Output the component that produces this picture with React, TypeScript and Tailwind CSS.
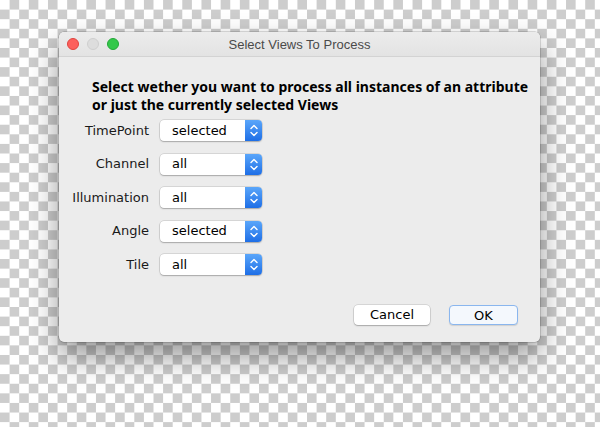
import React from "react";

const ui = "font-['DejaVu_Sans',sans-serif]";

function Stepper() {
  return (
    <div className="flex h-full w-[17px] items-center justify-center rounded-r-[4px] bg-gradient-to-b from-[#5aa6fa] to-[#1d6ee6]">
      <svg width="10" height="15" viewBox="0 0 10 15" fill="none">
        <path d="M2 5.5 L5 2.5 L8 5.5" stroke="white" strokeWidth="1.4" strokeLinecap="round" strokeLinejoin="round" />
        <path d="M2 9.5 L5 12.5 L8 9.5" stroke="white" strokeWidth="1.4" strokeLinecap="round" strokeLinejoin="round" />
      </svg>
    </div>
  );
}

function Row({ label, value }: { label: string; value: string }) {
  return (
    <div className="flex h-[21px] items-center">
      <span className="w-[90px] text-right text-[13px] text-[#1a1a1a]">{label}</span>
      <div className="ml-[11px] flex h-[21px] w-[102px] items-center justify-between rounded-[4px] bg-white shadow-[0_0_0_0.5px_rgba(0,0,0,0.18),0_1px_1.5px_rgba(0,0,0,0.22)]">
        <span className="pl-[12px] text-[13px] text-black">{value}</span>
        <Stepper />
      </div>
    </div>
  );
}

export default function App() {
  const rows = [
    ["TimePoint", "selected"],
    ["Channel", "all"],
    ["Illumination", "all"],
    ["Angle", "selected"],
    ["Tile", "all"],
  ];

  return (
    <div className="h-[427px] w-[600px] overflow-hidden bg-white bg-[image:conic-gradient(#cdcdcd_25%,#ffffff_0_50%,#cdcdcd_0_75%,#ffffff_0)] bg-[length:19.2px_19.2px] pl-[59px] pt-[32px]">
      <div className={`flex h-[310px] w-[481px] flex-col rounded-[5px] bg-[#ececec] shadow-[0_14px_30px_rgba(0,0,0,0.42),0_0_0_0.5px_rgba(0,0,0,0.25)] ${ui}`}>
        {/* title bar */}
        <div className="grid h-[25px] grid-cols-[1fr_auto_1fr] items-center rounded-t-[5px] border-b border-[#d3d3d3] bg-gradient-to-b from-[#ececec] to-[#e3e3e3]">
          <div className="flex items-center gap-[8px] pl-[8px]">
            <span className="h-[12px] w-[12px] rounded-full border border-[#e0443e] bg-[#fc605c]" />
            <span className="h-[12px] w-[12px] rounded-full border border-[#cfcfcf] bg-[#dddddd]" />
            <span className="h-[12px] w-[12px] rounded-full border border-[#24a838] bg-[#34c84a]" />
          </div>
          <span className="pt-[2px] font-['Liberation_Sans',sans-serif] text-[13px] text-[#4a4a4a]">
            Select Views To Process
          </span>
          <div />
        </div>

        {/* body */}
        <div className="flex flex-1 flex-col pt-[21px]">
          <div className="pl-[33px] font-['Noto_Sans',sans-serif] text-[14px] font-bold leading-[18px] text-black">
            <p className="whitespace-nowrap">Select wether you want to process all instances of an attribute</p>
            <p className="whitespace-nowrap">or just the currently selected Views</p>
          </div>

          <div className="mt-[6px] flex flex-col gap-[12.5px]">
            {rows.map(([l, v]) => (
              <Row key={l} label={l} value={v} />
            ))}
          </div>

          <div className="mt-auto flex justify-end gap-[19px] pb-[17px] pr-[22px]">
            <button className="h-[20px] w-[76px] rounded-[4px] bg-white text-[13px] text-black shadow-[0_0_0_0.5px_rgba(0,0,0,0.18),0_1px_1.5px_rgba(0,0,0,0.22)]">
              Cancel
            </button>
            <button className="h-[20px] w-[69px] rounded-[4px] border border-[#8ab6ee] bg-[#f4f8fd] text-[13px] text-black shadow-[0_1px_1px_rgba(0,0,0,0.12)]">
              OK
            </button>
          </div>
        </div>
      </div>
    </div>
  );
}
